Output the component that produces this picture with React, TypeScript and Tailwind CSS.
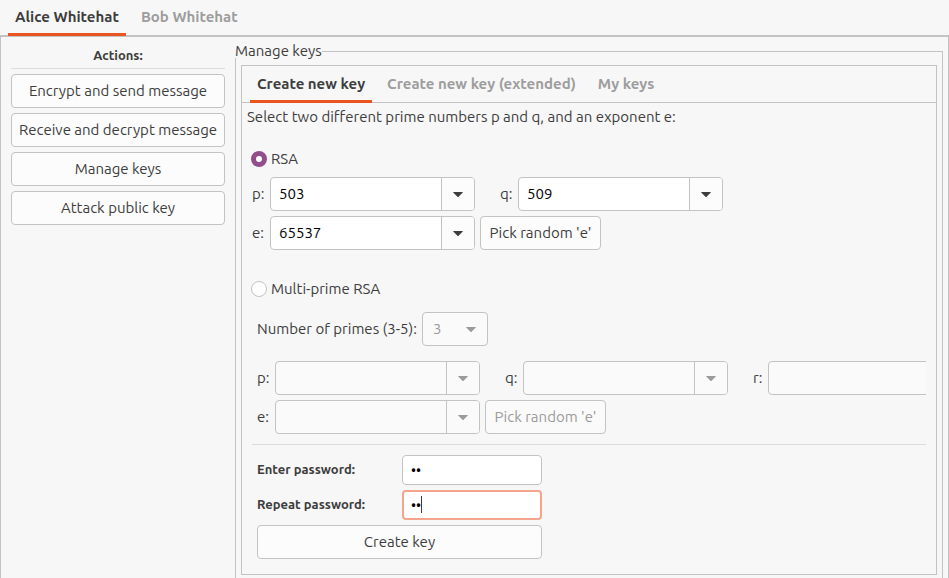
import { useState } from "react";

function Arrow() {
  return (
    <svg width="10" height="5" viewBox="0 0 10 5" fill="currentColor" aria-hidden="true">
      <path d="M0 0.3 Q0 0 0.5 0 H9.5 Q10 0 10 0.3 L5.6 4.7 Q5 5.2 4.4 4.7 Z" />
    </svg>
  );
}

type TabsProps = {
  label: string;
  items: string[];
  selected: number;
  onSelect: (index: number) => void;
};

function Tabs({ label, items, selected, onSelect }: TabsProps) {
  return (
    <div role="tablist" aria-label={label} className="flex gap-2 px-2">
      {items.map((item, i) => (
        <button
          key={item}
          type="button"
          role="tab"
          aria-selected={i === selected}
          onClick={() => onSelect(i)}
          className={
            i === selected
              ? "h-9 border-b-3 border-[#e95420] px-[7px] text-[15px] font-bold whitespace-nowrap text-[#3d3d3d]"
              : "h-9 border-b-3 border-transparent px-[7px] text-[15px] font-bold whitespace-nowrap text-[#9d9d9d]"
          }
        >
          {item}
        </button>
      ))}
    </div>
  );
}

type PushButtonProps = { text: string; className?: string; disabled?: boolean };

function PushButton({ text, className = "", disabled = false }: PushButtonProps) {
  return (
    <button
      type="button"
      disabled={disabled}
      className={`h-[34px] shrink-0 rounded border border-[#c3c3c3] bg-[#fcfcfc] text-[15px] whitespace-nowrap disabled:bg-[#fafafa] disabled:text-[#9b9b9b] ${className}`}
    >
      {text}
    </button>
  );
}

type ComboProps = {
  id: string;
  label: string;
  value?: string;
  disabled?: boolean;
  labelWidth?: string;
};

function Combo({ id, label, value = "", disabled = false, labelWidth = "w-[18px]" }: ComboProps) {
  return (
    <div className="flex shrink-0 items-center">
      <label htmlFor={id} className={`${labelWidth} shrink-0`}>
        {label}
      </label>
      <div
        className={
          disabled
            ? "flex h-[34px] w-[205px] overflow-hidden rounded border border-[#c3c3c3] bg-[#fafafa]"
            : "flex h-[34px] w-[205px] overflow-hidden rounded border border-[#c3c3c3] bg-white"
        }
      >
        <input
          id={id}
          type="text"
          defaultValue={value}
          disabled={disabled}
          className="min-w-0 flex-1 px-2 text-black outline-none"
        />
        <button
          type="button"
          aria-label={`Choose ${label}`}
          disabled={disabled}
          className="flex w-[33px] items-center justify-center border-l border-[#c3c3c3] bg-[#fcfcfc] disabled:bg-[#fafafa] disabled:text-[#9b9b9b]"
        >
          <Arrow />
        </button>
      </div>
    </div>
  );
}

type RadioProps = { id: string; text: string; checked: boolean; onChange: () => void };

function Radio({ id, text, checked, onChange }: RadioProps) {
  return (
    <div className="flex h-5 items-center gap-1 pl-[9px]">
      <input
        id={id}
        type="radio"
        name="scheme"
        checked={checked}
        onChange={onChange}
        className="size-4 appearance-none rounded-full border border-[#c3c3c3] bg-white checked:border-5 checked:border-[#924d8b]"
      />
      <label htmlFor={id}>{text}</label>
    </div>
  );
}

function CreateKey() {
  const [scheme, setScheme] = useState("rsa");
  return (
    <form className="pb-[15px]">
      <p className="h-[46px] pt-1 pl-[5px] leading-5">
        Select two different prime numbers p and q, and an exponent e:
      </p>

      <Radio id="rsa" text="RSA" checked={scheme === "rsa"} onChange={() => setScheme("rsa")} />
      <div className="flex flex-col gap-[5px] px-2.5 pt-2">
        <div className="flex gap-[25px]">
          <Combo id="rsa-p" label="p:" value="503" />
          <Combo id="rsa-q" label="q:" value="509" />
        </div>
        <div className="flex gap-[5px]">
          <Combo id="rsa-e" label="e:" value="65537" />
          <PushButton text="Pick random 'e'" className="w-[121px]" />
        </div>
      </div>

      <div className="pt-[29px]">
        <Radio
          id="multi"
          text="Multi-prime RSA"
          checked={scheme === "multi"}
          onChange={() => setScheme("multi")}
        />
      </div>
      <div className="mx-2.5 overflow-hidden border-b border-[#dcdcdc] pt-[13px] pb-2.5 pl-[5px]">
        <div className="flex items-center">
          <label htmlFor="count" className="w-[165px] shrink-0 whitespace-nowrap">
            Number of primes (3-5):
          </label>
          <div className="relative">
            <select
              id="count"
              disabled
              className="h-[34px] w-[66px] appearance-none rounded border border-[#c3c3c3] bg-[#fafafa] px-2.5 text-[#9b9b9b] opacity-100"
            >
              <option>3</option>
              <option>4</option>
              <option>5</option>
            </select>
            <span className="pointer-events-none absolute inset-y-0 right-3 flex items-center text-[#9b9b9b]">
              <Arrow />
            </span>
          </div>
        </div>
        <div className="mt-[15px] flex gap-[25px]">
          <Combo id="multi-p" label="p:" disabled />
          <Combo id="multi-q" label="q:" disabled />
          <Combo id="multi-r" label="r:" disabled labelWidth="w-[15px]" />
        </div>
        <div className="mt-[5px] flex gap-[5px]">
          <Combo id="multi-e" label="e:" disabled />
          <PushButton text="Pick random 'e'" className="w-[121px]" disabled />
        </div>
      </div>

      <div className="ml-[15px] grid w-[285px] grid-cols-[145px_140px] items-center gap-y-[5px] pt-2.5">
        <label htmlFor="password" className="pb-0.5 text-[13px] font-bold">
          Enter password:
        </label>
        <input
          id="password"
          type="password"
          defaultValue="ab"
          className="h-[30px] rounded border border-[#c3c3c3] bg-white px-2 text-sm text-black outline-none"
        />
        <label htmlFor="repeat" className="pb-0.5 text-[13px] font-bold">
          Repeat password:
        </label>
        <div className="relative flex">
          <input
            id="repeat"
            type="password"
            defaultValue="ab"
            className="h-[30px] w-full rounded border-2 border-[#f4a58c] bg-white px-[7px] text-sm text-black outline-none"
          />
          <span className="absolute top-1.5 left-[19px] h-[17px] w-px bg-[#3d3d3d]" />
        </div>
        <PushButton text="Create key" className="col-span-2" />
      </div>
    </form>
  );
}

export default function App() {
  const [user, setUser] = useState(0);
  const [page, setPage] = useState(0);
  return (
    <div className="flex h-screen flex-col overflow-hidden bg-[#f7f7f7] font-['Ubuntu','Noto_Sans',sans-serif] text-[15px] leading-5 text-[#3d3d3d]">
      <header className="h-[37px] shrink-0 border-b-2 border-[#c3c3c3]">
        <Tabs label="Users" items={["Alice Whitehat", "Bob Whitehat"]} selected={user} onSelect={setUser} />
      </header>
      <main className="flex flex-1 gap-2.5 border-x border-[#c3c3c3] pr-[5px] pl-2.5">
        <nav className="flex w-[214px] shrink-0 flex-col gap-[5px] pt-2">
          <h2 className="h-6 border-b border-[#dcdcdc] text-center text-[13px] leading-5 font-bold">Actions:</h2>
          <PushButton text="Encrypt and send message" />
          <PushButton text="Receive and decrypt message" />
          <PushButton text="Manage keys" />
          <PushButton text="Attack public key" />
        </nav>
        <fieldset className="mt-[7px] min-w-0 flex-1 border border-b-0 border-[#c3c3c3] px-[5px]">
          <legend className="-ml-1.5 h-3.5 bg-[#f7f7f7] leading-3.5">Manage keys</legend>
          <section className="mt-[7px] border border-[#c3c3c3]">
            <div className="h-[37px] border-b border-[#c3c3c3] pt-px">
              <Tabs
                label="Key pages"
                items={["Create new key", "Create new key (extended)", "My keys"]}
                selected={page}
                onSelect={setPage}
              />
            </div>
            <CreateKey />
          </section>
        </fieldset>
      </main>
    </div>
  );
}
